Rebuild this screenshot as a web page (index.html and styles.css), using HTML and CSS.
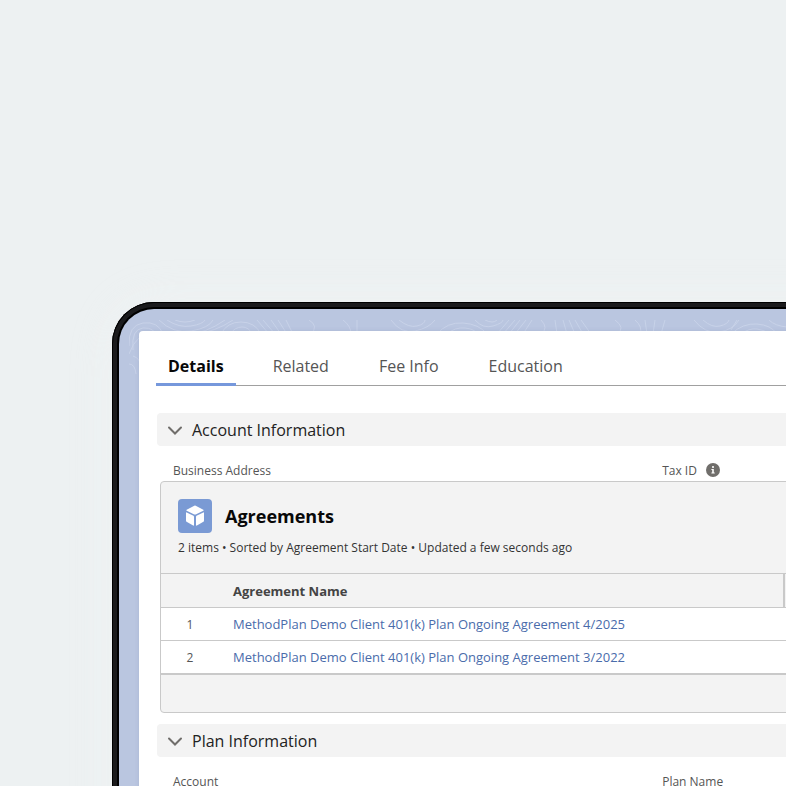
FILE: index.html
```html
<!DOCTYPE html>
<html lang="en">
<head>
    <meta charset="UTF-8">
    <meta name="viewport" content="width=device-width, initial-scale=1.0">
    <title>Account Details</title>
    <link rel="stylesheet" href="styles.css">
</head>
<body>
    <div class="device">
        <div class="screen">
            <!-- Contour line pattern behind the page -->
            <svg class="contours" width="1060" height="60" viewBox="0 0 1060 60" aria-hidden="true">
                <g fill="none" stroke="#c8d2e8" stroke-width="1">
                    <path d="M0 26Q-1 5 14 3T34 14M4 30Q2 9 14 8T28 18M0 34Q8 12 22 16"/>
                    <path d="M30 0Q44 14 62 11T84 0M38 0Q50 8 62 6T76 0M46 0Q56 4 66 0M58 14Q76 14 96 0M66 14Q86 12 104 0"/>
                    <path d="M92 14Q98 2 112 2T132 14M101 14Q106 7 113 7T123 14M128 0L140 14M134 0L146 14M142 0L152 14M149 0L158 14M157 0L164 14M180 0Q190 6 182 14"/>
                    <path d="M214 0Q222 6 222 14M228 0V14M262 0Q272 14 286 11T306 0M270 0Q280 8 288 6T296 0"/>
                    <path d="M308 14Q318 2 334 3T358 14M318 14Q326 7 336 8T348 14M346 0Q354 9 364 6T374 0M356 0Q364 4 368 0"/>
                    <path d="M368 14L380 0M374 14L386 0M380 14L391 0M386 14L397 0M394 14L403 0M412 0Q420 8 412 14M426 0L428 14M434 0L438 14M440 0L446 14M446 0L454 14M452 0L462 14"/>
                    <path d="M486 0Q497 8 488 14M506 0Q514 7 511 14M516 0L518 14M526 0L524 14M536 0L532 14"/>
                    <path d="M565 0Q576 14 590 12T610 0M574 0Q583 8 591 6T600 0M602 14Q614 3 628 4T648 14M612 14Q620 8 628 9T640 14M608 0L602 10M640 0Q646 6 658 7"/>
                    <path d="M700 0Q720 20 744 0M710 0Q722 12 734 0M780 14Q800 -8 820 14M860 0Q880 20 900 0"/>
                    <path d="M4 36Q12 38 12 50M0 44Q6 44 7 54"/>
                </g>
            </svg>
            <main class="page">
                <div class="tabs" role="tablist">
                    <button class="tab active" role="tab" aria-selected="true">Details</button>
                    <button class="tab" role="tab" aria-selected="false">Related</button>
                    <button class="tab" role="tab" aria-selected="false">Fee Info</button>
                    <button class="tab" role="tab" aria-selected="false">Education</button>
                </div>

                <section>
                    <h2>
                        <button class="section-toggle" aria-expanded="true">
                            <svg class="chevron" width="16" height="12" viewBox="0 0 16 12" aria-hidden="true"><path d="M2 3.5L8 9.5L14 3.5"/></svg>
                            Account Information
                        </button>
                    </h2>
                    <div class="fields">
                        <div class="field">Business Address</div>
                        <div class="field">Tax ID
                            <svg class="info" width="14" height="14" viewBox="0 0 14 14" aria-hidden="true">
                                <circle cx="7" cy="7" r="7" fill="#706e6b"/>
                                <circle cx="7" cy="4" r="1.1" fill="#fff"/>
                                <path d="M5.4 6H7.8V9.4H8.7V10.5H5.4V9.4H6.2V7H5.4Z" fill="#fff"/>
                            </svg>
                        </div>
                    </div>

                    <div class="card">
                        <header class="card-header">
                            <div class="card-title">
                                <svg class="card-icon" width="34" height="34" viewBox="0 0 34 34" aria-hidden="true">
                                    <rect width="34" height="34" rx="4" fill="#7a9ad4"/>
                                    <path d="M16.3 6.7Q17 6.4 17.7 6.7L25.3 10.7Q26 11.2 25.3 11.7L17.7 15.4Q17 15.7 16.3 15.4L8.7 11.7Q8 11.2 8.7 10.7Z" fill="#fff"/>
                                    <path d="M8.7 13.4L15.5 16.7Q16 17 16 17.6V26Q16 27 15.1 26.6L8.6 22.7Q8 22.3 8 21.6V13.9Q8 13.1 8.7 13.4Z" fill="#fff"/>
                                    <path d="M25.3 13.4L18.5 16.7Q18 17 18 17.6V26Q18 27 18.9 26.6L25.4 22.7Q26 22.3 26 21.6V13.9Q26 13.1 25.3 13.4Z" fill="#fff"/>
                                </svg>
                                <h3>Agreements</h3>
                            </div>
                            <p class="card-meta">2 items • Sorted by Agreement Start Date • Updated a few seconds ago</p>
                        </header>
                        <table class="agreements">
                            <thead>
                                <tr>
                                    <th class="index"></th>
                                    <th class="name">Agreement Name</th>
                                    <th></th>
                                </tr>
                            </thead>
                            <tbody>
                                <tr>
                                    <td class="index">1</td>
                                    <td class="name"><a href="#">MethodPlan Demo Client 401(k) Plan Ongoing Agreement 4/2025</a></td>
                                    <td></td>
                                </tr>
                                <tr>
                                    <td class="index">2</td>
                                    <td class="name"><a href="#">MethodPlan Demo Client 401(k) Plan Ongoing Agreement 3/2022</a></td>
                                    <td></td>
                                </tr>
                            </tbody>
                        </table>
                        <footer class="card-footer"></footer>
                    </div>
                </section>

                <section>
                    <h2>
                        <button class="section-toggle" aria-expanded="true">
                            <svg class="chevron" width="16" height="12" viewBox="0 0 16 12" aria-hidden="true"><path d="M2 3.5L8 9.5L14 3.5"/></svg>
                            Plan Information
                        </button>
                    </h2>
                    <div class="fields">
                        <div class="field">Account</div>
                        <div class="field">Plan Name</div>
                    </div>
                </section>
            </main>
        </div>
    </div>
</body>
</html>
```
FILE: styles.css
```css
* {
    box-sizing: border-box;
}

body {
    margin: 0;
    height: 100vh;
    overflow: hidden;
    padding: 302px 0 0 112px;
    background: #edf1f2;
    font-family: "Segoe UI", "Open Sans", sans-serif;
    font-size: 13px;
    color: #333;
}

h2, h3, p {
    margin: 0;
}

button {
    border: none;
    background: none;
    font-family: inherit;
    cursor: pointer;
}

/* Laptop frame, runs off the right and bottom of the window */
.device {
    width: 140vw;
    min-height: 100vh;
    padding: 7px;
    border-radius: 42px;
    background: #000;
    box-shadow: inset 0 0 0 1px #000, inset 0 0 0 5px #1b1b1d, 0 0 50px rgba(244, 247, 247, 0.3);
}

.screen {
    position: relative;
    min-height: 100vh;
    padding: 22px 20px;
    border-radius: 35px;
    background: #bac6e0;
    overflow: hidden;
}

.contours {
    position: absolute;
    top: 11px;
    left: 10px;
}

.page {
    position: relative;
    min-height: 100vh;
    padding: 17px 18px;
    border-radius: 4px;
    background: #fff;
    box-shadow: 0 0 4px rgba(70, 90, 140, 0.15);
}

/* Tabs */
.tabs {
    display: flex;
    gap: 24px;
    margin: 0 0 27px -1px;
    border-bottom: 1px solid #a0a0a0;
}

.tab {
    height: 38px;
    padding: 0 13px;
    margin-bottom: -1px;
    border-bottom: 3px solid transparent;
    font-size: 16px;
    color: #555;
}

.tab.active {
    padding: 0 12px;
    border-bottom-color: #7698dc;
    font-weight: 700;
    color: #080808;
}

/* Sections */
.section-toggle {
    display: flex;
    align-items: center;
    gap: 9px;
    width: 100%;
    height: 33px;
    padding: 0 10px;
    border-radius: 4px;
    background: #f3f3f3;
    font-size: 16px;
    color: #222;
}

.chevron path {
    fill: none;
    stroke: #706e6b;
    stroke-width: 2;
    stroke-linecap: round;
}

.fields {
    display: grid;
    grid-template-columns: 1fr 1fr;
    padding: 15px 16px 2px;
}

.field {
    display: flex;
    align-items: center;
    gap: 9px;
    height: 18px;
    font-size: 12px;
    color: #555;
}

/* Related list card */
.card {
    margin: 0 3px 11px;
    border: 1px solid #c9c9c9;
    border-radius: 4px;
    background: #f3f3f3;
}

.card-header {
    height: 91px;
    padding: 17px;
}

.card-title {
    display: flex;
    align-items: center;
    gap: 13px;
}

.card-title h3 {
    font-size: 18px;
    color: #080808;
}

.card-meta {
    margin-top: 6px;
    font-size: 12px;
    line-height: 18px;
}

.agreements {
    width: 100%;
    border-collapse: collapse;
    table-layout: fixed;
    text-align: left;
}

.agreements th {
    height: 34px;
    padding: 0;
    border-top: 1px solid #c9c9c9;
    border-bottom: 1px solid #c9c9c9;
    font-size: 13px;
    color: #444;
}

.agreements td {
    height: 33px;
    padding: 0;
    border-bottom: 1px solid #c9c9c9;
    background: #fff;
}

.agreements .index {
    width: 62px;
    padding-right: 4px;
    font-size: 12px;
    color: #555;
    text-align: center;
}

.agreements .name {
    width: 56%;
    padding-left: 10px;
}

.agreements th.name {
    border-right: 2px solid #c9c9c9;
}

.agreements a {
    color: #4a6cab;
    text-decoration: none;
}

.card-footer {
    height: 38px;
    border-top: 1px solid #c9c9c9;
}
```
